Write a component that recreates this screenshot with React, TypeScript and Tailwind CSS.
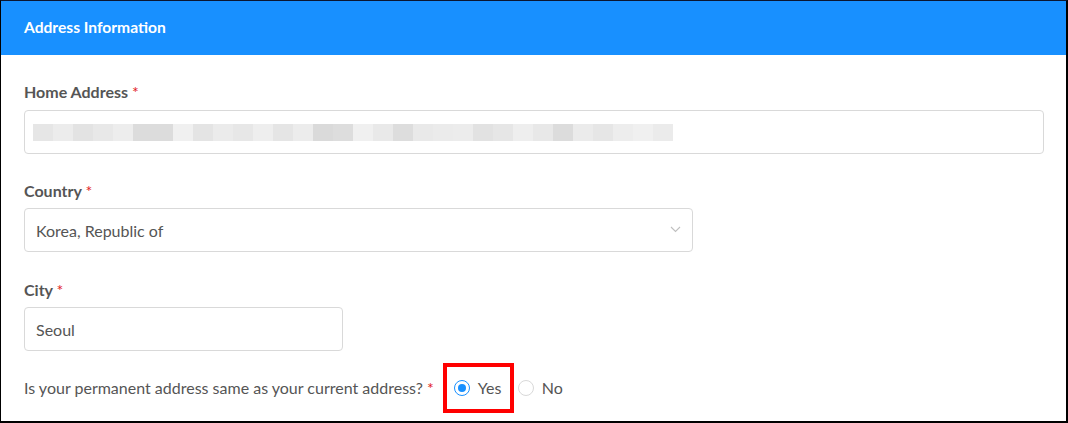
import React from "react";

const blurBlocks = [
  "bg-[#e6e6e6]", "bg-[#ececec]", "bg-[#e3e3e3]", "bg-[#e8e8e8]", "bg-[#ededed]", "bg-[#dcdcdc]",
  "bg-[#dcdcdc]", "bg-[#f0f0f0]", "bg-[#e4e4e4]", "bg-[#ebebeb]", "bg-[#e7e7e7]", "bg-[#eeeeee]",
  "bg-[#e5e5e5]", "bg-[#ececec]", "bg-[#dadada]", "bg-[#dddddd]", "bg-[#f0f0f0]", "bg-[#e9e9e9]",
  "bg-[#dddddd]", "bg-[#e9e9e9]", "bg-[#ebebeb]", "bg-[#ececec]", "bg-[#e2e2e2]", "bg-[#e6e6e6]",
  "bg-[#eeeeee]", "bg-[#e8e8e8]", "bg-[#dcdcdc]", "bg-[#ebebeb]", "bg-[#e6e6e6]", "bg-[#ededed]",
  "bg-[#f0f0f0]", "bg-[#ebebeb]",
];

function Label({ text }: { text: string }) {
  return (
    <div className="h-[22px] leading-[22px] text-[16px] font-bold text-[#555555] mb-[6px]">
      {text} <span className="text-[#e2211c] font-normal">*</span>
    </div>
  );
}

export default function App() {
  return (
    <div
      className="w-[1068px] h-[423px] bg-white border-l border-t-1 border-r-2 border-b-2 border-l-black border-t-[#0b1630] border-r-black border-b-black overflow-hidden"
      style={{ fontFamily: "Lato, 'Noto Sans', sans-serif" }}
    >
      <div className="h-[54px] bg-[#1890ff] flex items-center px-[23px]">
        <span className="text-white text-[15.6px] font-bold">Address Information</span>
      </div>
      <div className="px-[23px] pt-[26px]">
        <div className="h-[22px] leading-[22px] text-[16px] font-bold text-[#555555] mb-[7px]">
          Home Address <span className="text-[#e2211c] font-normal">*</span>
        </div>
        <div className="h-[44px] w-[1020px] border border-[#d9d9d9] rounded-[4px] flex items-center pl-[8px]">
          <div className="flex h-[17px]">
            {blurBlocks.map((c, i) => (
              <div key={i} className={`w-[20px] h-full ${c}`} />
            ))}
          </div>
        </div>

        <div className="pt-[26px]">
          <Label text="Country" />
          <div className="h-[44px] w-[669px] border border-[#d9d9d9] rounded-[4px] flex items-center justify-between pl-[11px] pr-[11px] pt-[2px] text-[16px] text-[#555555]">
            <span>Korea, Republic of</span>
            <svg width="11" height="7" viewBox="0 0 11 7" fill="none" className="-mt-[3px]">
              <path d="M1 1l4.5 4.5L10 1" stroke="#bfbfbf" strokeWidth="1.1" />
            </svg>
          </div>
        </div>

        <div className="pt-[27px]">
          <Label text="City" />
          <div className="h-[44px] w-[319px] border border-[#d9d9d9] rounded-[4px] flex items-center pl-[11px] pt-[2px] text-[16px] text-[#555555]">
            Seoul
          </div>
        </div>

        <div className="mt-[12px] flex items-center text-[16px] text-[#555555]">
          <span>Is your permanent address same as your current address?</span>
          <span className="text-[#e2211c] ml-[4px]">*</span>
          <div className="ml-[9px] h-[50px] w-[71px] border-4 border-[#ff0000] flex items-center pl-[7px]">
            <span className="w-[16px] h-[16px] rounded-full border border-[#1890ff] flex items-center justify-center">
              <span className="w-[8px] h-[8px] rounded-full bg-[#1890ff]" />
            </span>
            <span className="ml-[8px]">Yes</span>
          </div>
          <span className="ml-[4px] w-[16px] h-[16px] rounded-full border border-[#d9d9d9]" />
          <span className="ml-[8px]">No</span>
        </div>
      </div>
    </div>
  );
}
